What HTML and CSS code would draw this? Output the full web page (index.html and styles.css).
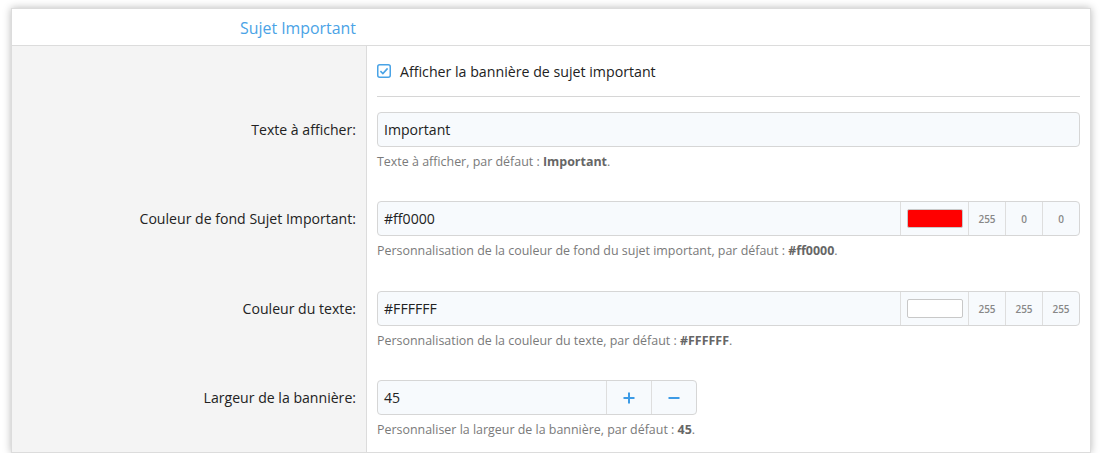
FILE: index.html
```html
<!DOCTYPE html>
<html lang="fr">
<head>
<meta charset="utf-8">
<title>Sujet Important</title>
<link rel="stylesheet" href="styles.css">
</head>
<body>
<div class="panel">
  <div class="panel-head">
    <div class="head-title">Sujet Important</div>
  </div>
  <div class="panel-body">
    <div class="col-labels">
      <div class="lab lab-check"></div>
      <div class="lab"><span>Texte à afficher:</span></div>
      <div class="lab tall"><span>Couleur de fond Sujet Important:</span></div>
      <div class="lab"><span>Couleur du texte:</span></div>
      <div class="lab"><span>Largeur de la bannière:</span></div>
    </div>
    <div class="col-fields">
      <div class="check-row">
        <svg class="cb" viewBox="0 0 14 14" width="14" height="14">
          <rect x="0.75" y="0.75" width="12.5" height="12.5" rx="2" fill="#fff" stroke="#49a3e6" stroke-width="1.5"/>
          <path d="M3.4 7.1 L5.9 9.5 L10.6 4.4" fill="none" stroke="#49a3e6" stroke-width="1.6"/>
        </svg>
        <span>Afficher la bannière de sujet important</span>
      </div>
      <div class="field">
        <div class="input-group"><div class="input">Important</div></div>
        <div class="hint">Texte à afficher, par défaut : <b>Important</b>.</div>
      </div>
      <div class="field tall">
        <div class="input-group">
          <div class="input">#ff0000</div>
          <div class="addon swatch-cell"><span class="swatch red"></span></div>
          <div class="addon num">255</div>
          <div class="addon num">0</div>
          <div class="addon num">0</div>
        </div>
        <div class="hint">Personnalisation de la couleur de fond du sujet important, par défaut : <b>#ff0000</b>.</div>
      </div>
      <div class="field">
        <div class="input-group">
          <div class="input">#FFFFFF</div>
          <div class="addon swatch-cell"><span class="swatch white"></span></div>
          <div class="addon num">255</div>
          <div class="addon num">255</div>
          <div class="addon num">255</div>
        </div>
        <div class="hint">Personnalisation de la couleur du texte, par défaut : <b>#FFFFFF</b>.</div>
      </div>
      <div class="field">
        <div class="input-group narrow">
          <div class="input">45</div>
          <div class="addon btn">
            <svg viewBox="0 0 12 12" width="12" height="12"><path d="M6 0.5 V11.5 M0.5 6 H11.5" stroke="#3d9be6" stroke-width="2" fill="none"/></svg>
          </div>
          <div class="addon btn">
            <svg viewBox="0 0 12 12" width="12" height="12"><path d="M0.5 6 H11.5" stroke="#3d9be6" stroke-width="2" fill="none"/></svg>
          </div>
        </div>
        <div class="hint">Personnaliser la largeur de la bannière, par défaut : <b>45</b>.</div>
      </div>
    </div>
  </div>
</div>
</body>
</html>
```
FILE: styles.css
```css
* { box-sizing: border-box; }
html, body { margin: 0; padding: 0; background: #fff; }
body {
  font-family: "Open Sans", "Noto Sans", sans-serif;
  color: #222;
  padding: 8px 15px 0 11px;
}
.panel {
  width: 1080px;
  height: 445px;
  border: 1px solid #dcdcdc;
  box-shadow: 0 0 8px rgba(0,0,0,0.28);
  background: #fff;
  overflow: hidden;
  display: flex;
  flex-direction: column;
}
.panel-head {
  height: 37px;
  flex: none;
  border-bottom: 1px solid #dcdcdc;
  display: flex;
  align-items: center;
}
.head-title {
  width: 354px;
  text-align: right;
  padding-right: 10px;
  font-size: 15.9px;
  color: #4aa3e6;
  padding-top: 2px;
}
.panel-body { flex: 1; display: flex; }
.col-labels {
  width: 355px;
  flex: none;
  background: #f4f4f4;
  border-right: 1px solid #dcdcdc;
}
.lab {
  height: 89px;
  padding: 15px 10px 0 0;
  display: flex;
  justify-content: flex-end;
  font-size: 14.1px;
  color: #222;
}
.lab.tall { height: 90px; }
.lab span { height: 35px; line-height: 35px; }
.lab.lab-check { height: 51px; padding: 0; }
.col-fields { flex: 1; padding: 0 10px; }
.check-row {
  height: 51px;
  border-bottom: 1px solid #d6d6d6;
  display: flex;
  align-items: center;
  font-size: 14.2px;
}
.cb { margin-right: 9px; flex: none; }
.field { height: 89px; padding-top: 15px; }
.field.tall { height: 90px; }
.input-group {
  height: 35px;
  display: flex;
  border: 1px solid #d6d6d6;
  border-radius: 4px;
  background: #f7fafd;
  overflow: hidden;
}
.input-group.narrow { width: 320px; }
.input {
  flex: 1;
  padding-left: 6px;
  line-height: 33px;
  font-size: 14.1px;
  color: #222;
}
.addon {
  border-left: 1px solid #dedede;
  display: flex;
  align-items: center;
  justify-content: center;
}
.swatch-cell { width: 68px; }
.swatch {
  width: 56px;
  height: 19px;
  border: 1px solid #c8c8c8;
  border-radius: 2px;
}
.swatch.red { background: #ff0000; }
.swatch.white { background: #fff; }
.num {
  width: 37px;
  font-size: 10px;
  font-weight: 600;
  color: #888;
}
.btn { width: 45px; }
.hint {
  margin-top: 5px;
  font-size: 12.45px;
  line-height: 19px;
  color: #7a7a7a;
}
.hint b { color: #666; font-weight: 700; }
```
